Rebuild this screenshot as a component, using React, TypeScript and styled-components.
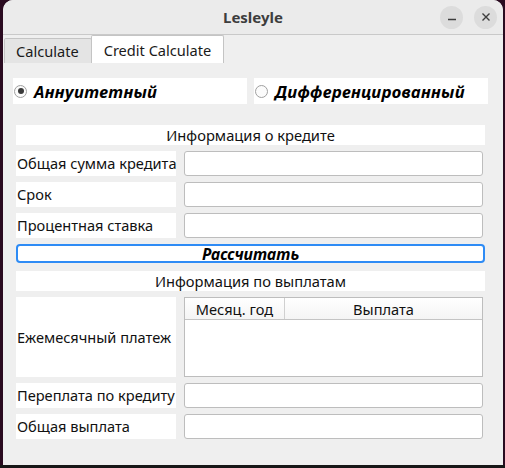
import React from "react";
import styled, { createGlobalStyle } from "styled-components";

const Global = createGlobalStyle`
  html, body { margin: 0; padding: 0; }
  body { background: #2a0b20; width: 505px; height: 468px; overflow: hidden; font-family: "Noto Sans", "DejaVu Sans", sans-serif; }
`;

const Desktop = styled.div`
  width: 505px;
  height: 468px;
  display: flex;
  flex-direction: column;
`;

const Window = styled.div`
  margin-left: 3px;
  width: 500px;
  height: 465px;
  background: #efefef;
  border-radius: 10px 10px 0 0;
  overflow: hidden;
  display: flex;
  flex-direction: column;
`;

const Bottom = styled.div`
  flex: 1;
  background: #171717;
`;

const TitleBar = styled.div`
  height: 34px;
  border-bottom: 1px solid #c9c9c9;
  background: #ebebeb;
  display: grid;
  grid-template-columns: 1fr auto 1fr;
  align-items: center;
`;

const Title = styled.div`
  grid-column: 2;
  font-weight: bold;
  font-size: 15px;
  color: #3d3d3d;
`;

const WinButtons = styled.div`
  grid-column: 3;
  justify-self: end;
  display: flex;
  gap: 11px;
  padding-right: 6px;
`;

const WinButton = styled.div`
  width: 23px;
  height: 23px;
  border-radius: 50%;
  background: #dcdcdc;
  display: flex;
  align-items: center;
  justify-content: center;
`;

const TabBar = styled.div`
  display: flex;
  align-items: flex-end;
  height: 28px;
  padding-left: 1px;
`;

const Tab = styled.div<{ $active?: boolean }>`
  height: ${(p) => (p.$active ? 28 : 25)}px;
  box-sizing: border-box;
  padding: 0 12px 0 ${(p) => (p.$active ? 12 : 11)}px;
  display: flex;
  align-items: center;
  font-size: 14.6px;
  color: #1a1a1a;
  background: ${(p) => (p.$active ? "#ffffff" : "#e4e4e4")};
  border: 1px solid #c4c4c4;
  border-bottom: none;
  border-radius: 2px 2px 0 0;
  margin-left: ${(p) => (p.$active ? -1 : 0)}px;
`;

const Content = styled.div`
  padding: 15px 0 0 10px;
  display: flex;
  flex-direction: column;
`;

const RadioRow = styled.div`
  display: flex;
  gap: 7px;
  margin-bottom: 21px;
`;

const RadioBox = styled.div`
  width: 234px;
  height: 26px;
  background: #ffffff;
  display: flex;
  align-items: center;
  gap: 7px;
  padding-left: 1px;
  box-sizing: border-box;
`;

const RadioCircle = styled.div<{ $checked?: boolean }>`
  width: 13px;
  height: 13px;
  box-sizing: border-box;
  border-radius: 50%;
  border: 1px solid #a0a0a0;
  background: #fbfbfb;
  display: flex;
  align-items: center;
  justify-content: center;
  &::after {
    content: "";
    display: ${(p) => (p.$checked ? "block" : "none")};
    width: 6px;
    height: 6px;
    border-radius: 50%;
    background: #3a3a3a;
  }
`;

const RadioLabel = styled.span`
  font-size: 16.6px;
  font-weight: bold;
  font-style: italic;
  letter-spacing: 0.3px;
  color: #000;
`;

const Form = styled.div`
  margin-left: 3px;
  width: 469px;
  display: flex;
  flex-direction: column;
  gap: 6px;
`;

const SectionHeader = styled.div`
  height: 20px;
  background: #ffffff;
  display: flex;
  align-items: center;
  justify-content: center;
  font-size: 14.7px;
  color: #111;
`;

const Row = styled.div<{ $h?: number }>`
  display: grid;
  grid-template-columns: 160px 299px;
  column-gap: 8px;
  height: ${(p) => p.$h ?? 25}px;
`;

const Label = styled.div`
  background: #ffffff;
  display: flex;
  align-items: center;
  padding-left: 1px;
  padding-bottom: 1px;
  font-size: 14.6px;
  color: #111;
  white-space: nowrap;
`;

const Input = styled.div`
  background: #ffffff;
  border: 1px solid #bdbdbd;
  border-radius: 3px;
  box-sizing: border-box;
`;

const Button = styled.div`
  height: 19px;
  box-sizing: border-box;
  border: 2px solid #2e8bf5;
  border-radius: 4px;
  background: #ffffff;
  display: flex;
  align-items: center;
  justify-content: center;
  font-size: 15.8px;
  font-weight: bold;
  font-style: italic;
  color: #000;
  margin-bottom: 2px;
`;

const Table = styled.div`
  background: #ffffff;
  border: 1px solid #bdbdbd;
  display: flex;
  flex-direction: column;
`;

const TableHead = styled.div`
  display: grid;
  grid-template-columns: 100px 1fr;
  height: 21px;
  border-bottom: 1px solid #c4c4c4;
  background: linear-gradient(#ffffff, #f4f4f4);
`;

const HeadCell = styled.div<{ $last?: boolean }>`
  display: flex;
  align-items: center;
  justify-content: center;
  font-size: 14.6px;
  color: #111;
  border-right: ${(p) => (p.$last ? "none" : "1px solid #d0d0d0")};
`;

export default function App() {
  return (
    <>
      <Global />
      <Desktop>
        <Window>
          <TitleBar>
            <Title>Lesleyle</Title>
            <WinButtons>
              <WinButton>
                <svg width="10" height="10" viewBox="0 0 10 10">
                  <line x1="1" y1="7.5" x2="9" y2="7.5" stroke="#3d3d3d" strokeWidth="1.3" />
                </svg>
              </WinButton>
              <WinButton>
                <svg width="10" height="10" viewBox="0 0 10 10">
                  <path d="M1.5 1.5 L8.5 8.5 M8.5 1.5 L1.5 8.5" stroke="#3d3d3d" strokeWidth="1.4" />
                </svg>
              </WinButton>
            </WinButtons>
          </TitleBar>
          <TabBar>
            <Tab>Calculate</Tab>
            <Tab $active>Credit Calculate</Tab>
          </TabBar>
          <Content>
            <RadioRow>
              <RadioBox>
                <RadioCircle $checked />
                <RadioLabel>Аннуитетный</RadioLabel>
              </RadioBox>
              <RadioBox>
                <RadioCircle />
                <RadioLabel>Дифференцированный</RadioLabel>
              </RadioBox>
            </RadioRow>
            <Form>
              <SectionHeader>Информация о кредите</SectionHeader>
              <Row>
                <Label>Общая сумма кредита</Label>
                <Input />
              </Row>
              <Row>
                <Label>Срок</Label>
                <Input />
              </Row>
              <Row>
                <Label>Процентная ставка</Label>
                <Input />
              </Row>
              <Button>Рассчитать</Button>
              <SectionHeader>Информация по выплатам</SectionHeader>
              <Row $h={80}>
                <Label>Ежемесячный платеж</Label>
                <Table>
                  <TableHead>
                    <HeadCell>Месяц. год</HeadCell>
                    <HeadCell $last>Выплата</HeadCell>
                  </TableHead>
                </Table>
              </Row>
              <Row>
                <Label>Переплата по кредиту</Label>
                <Input />
              </Row>
              <Row>
                <Label>Общая выплата</Label>
                <Input />
              </Row>
            </Form>
          </Content>
        </Window>
        <Bottom />
      </Desktop>
    </>
  );
}
